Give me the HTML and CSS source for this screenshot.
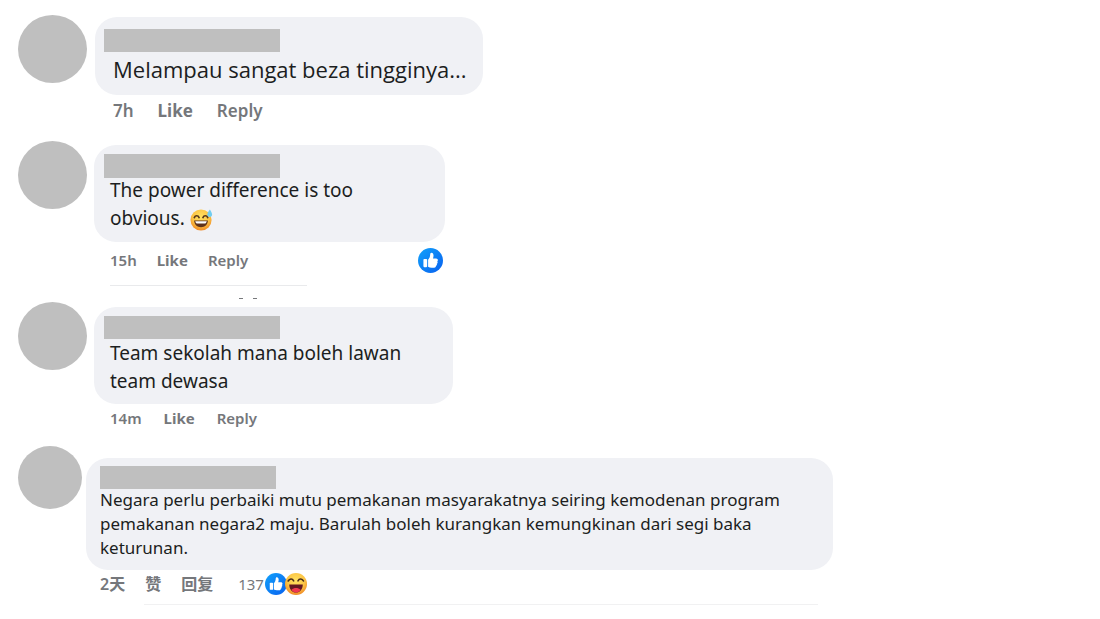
FILE: index.html
```html
<!DOCTYPE html>
<html lang="ms">
<head>
<meta charset="utf-8">
<meta name="viewport" content="width=device-width, initial-scale=1">
<title>Comments</title>
<link rel="stylesheet" href="styles.css">
</head>
<body>
<svg class="defs" width="0" height="0" aria-hidden="true">
  <defs>
    <linearGradient id="blue" x1="0" y1="0" x2="1" y2="1"><stop offset="0" stop-color="#12a2fb"/><stop offset="1" stop-color="#0860ef"/></linearGradient>
    <radialGradient id="face" cx=".5" cy=".35" r=".65"><stop offset="0" stop-color="#ffe261"/><stop offset=".6" stop-color="#fcc545"/><stop offset="1" stop-color="#f08a26"/></radialGradient>
    <symbol id="thumb" viewBox="0 0 24 24">
      <circle cx="12" cy="12" r="12" fill="url(#blue)"/>
      <rect x="5.2" y="10.6" width="3.600" height="7.800" rx=".8" fill="#fff"/>
      <path fill="#fff" d="M9.700 11.200c1.300-1.200 1.900-2.800 2-4.900 0-1 .4-1.700 1.200-1.700 1.300 0 2 1.200 2 2.700 0 1-.2 1.900-.5 2.700h3c1 0 1.700.7 1.700 1.600 0 .6-.2 1-.6 1.300.3.3.4.7.3 1.200-.1.500-.4.900-.8 1.100.2.4.2.8.1 1.200-.2.400-.5.700-.9.800.1 1-.6 1.700-1.700 1.700h-2.500c-1.300 0-2.300-.3-3.300-.9z"/>
    </symbol>
    <symbol id="laugh" viewBox="0 0 24 24">
      <circle cx="12" cy="12" r="12" fill="url(#face)"/>
      <path d="M3.500 8.700c1.500-2.700 4.500-3 5.900-.2M14.200 8.500c1.500-2.800 4.500-2.500 5.900.2" fill="none" stroke="#4a2d1b" stroke-width="1.800" stroke-linecap="round"/>
      <path d="M4.600 12.500h14.800c0 5-3 8.800-7.400 8.800s-7.400-3.800-7.400-8.800z" fill="#641722"/>
      <path d="M7 18.300c2.700-2.600 7.300-2.600 10 0-1.200 1.900-2.900 3-5 3s-3.800-1.100-5-3z" fill="#f0384f"/>
    </symbol>
    <symbol id="sweat" viewBox="0 0 24 24">
      <circle cx="11.500" cy="12.500" r="11" fill="url(#face)"/>
      <path d="M4.500 10c1-2.500 4-2.500 5 0M13.500 10c1-2.500 4-2.500 5 0" fill="none" stroke="#55361b" stroke-width="1.700" stroke-linecap="round"/>
      <path d="M4.300 13h14.400c-.2 4.300-3.300 7-7.200 7s-7-2.700-7.200-7z" fill="#60321c"/>
      <path d="M5.500 13.800h12c-.4 1.700-1.300 2.400-2.200 2.400H7.700c-1 0-1.900-.8-2.200-2.400z" fill="#fff"/>
      <path d="M20.800 1.500c-1.700 2.100-3 4-2.700 5.800.3 1.500 1.500 2.200 2.900 2 1.500-.3 2.300-1.600 2-3.100-.3-1.600-1.200-3-2.200-4.700z" fill="#71cdf0"/>
    </symbol>
  </defs>
</svg>
<main class="thread">
  <article class="comment first">
    <div class="avatar"></div>
    <div class="body">
      <div class="bubble"><div class="name"></div><p class="text">Melampau sangat beza tingginya...</p></div>
      <div class="actions"><span>7h</span><button type="button" class="like">Like</button><button type="button">Reply</button></div>
    </div>
  </article>
  <article class="comment second">
    <div class="avatar"></div>
    <div class="body">
      <div class="bubble"><div class="name"></div><p class="text">The power difference is too obvious. <svg class="emoji" role="img" aria-label="Grinning face with sweat"><use href="#sweat"/></svg></p></div>
      <div class="actions"><span>15h</span><button type="button" class="like">Like</button><button type="button">Reply</button><svg class="badge" role="img" aria-label="Like reaction"><use href="#thumb"/></svg></div>
      <hr class="rule">
      <div class="marks"><i></i><i></i></div>
    </div>
  </article>
  <article class="comment third">
    <div class="avatar"></div>
    <div class="body">
      <div class="bubble"><div class="name"></div><p class="text">Team sekolah mana boleh lawan team dewasa</p></div>
      <div class="actions"><span>14m</span><button type="button" class="like">Like</button><button type="button">Reply</button></div>
    </div>
  </article>
  <article class="comment fourth">
    <div class="avatar"></div>
    <div class="body">
      <div class="bubble"><div class="name"></div><p class="text">Negara perlu perbaiki mutu pemakanan masyarakatnya seiring kemodenan program pemakanan negara2 maju. Barulah boleh kurangkan kemungkinan dari segi baka keturunan.</p></div>
      <div class="actions" lang="zh-CN"><span>2天</span><button type="button">赞</button><button type="button">回复</button><span class="reactions"><span>137</span><svg role="img" aria-label="Like"><use href="#thumb"/></svg><svg role="img" aria-label="Haha"><use href="#laugh"/></svg></span></div>
      <hr class="rule">
    </div>
  </article>
</main>
</body>
</html>
```

FILE: styles.css
```css
* { box-sizing: border-box; }
body {
  margin: 0;
  background: #fff;
  color: #1c1e21;
  font-family: "Noto Sans", "Open Sans", "Noto Sans CJK SC", sans-serif;
}
.defs { position: absolute; }
.thread { padding: 15px 18px; }
.comment { display: flex; align-items: flex-start; gap: 7px; }
.avatar { flex: none; width: 69px; height: 68px; border-radius: 50%; background: #bfbfbf; }
.body { flex: 1; min-width: 0; }
.bubble { padding: 9px 16px; border-radius: 22px; background: #f0f1f5; }
.name { width: 176px; max-width: 100%; height: 23px; margin-left: -6px; background: #bfbfbf; }
.text { margin: 0; font-size: 19px; line-height: 28px; }
.actions {
  display: flex;
  align-items: center;
  gap: 22px;
  padding-left: 16px;
  color: #75777b;
  font-size: 15px;
  font-weight: 600;
  line-height: 20px;
}
.actions button { padding: 0; border: 0; background: none; color: inherit; font: inherit; cursor: pointer; }
.actions .like { font-weight: 700; }
.rule { height: 1px; margin: 0; border: 0; background: #e9eaec; }

.first { gap: 8px; }
.first .bubble { max-width: 388px; margin-top: 2px; padding: 12px 16px 12px 18px; }
.first .name { margin-left: -9px; }
.first .text { margin-top: 3px; font-family: "Open Sans", "Noto Sans", sans-serif; font-size: 22px; }
.first .actions { margin-top: 6px; padding-left: 18px; gap: 24px; font-size: 17px; }

.second { margin-top: 20px; }
.second .bubble { max-width: 351px; margin-top: 4px; padding: 9px 40px 10px 16px; }
.second .name { height: 24px; }
.second .text { margin-top: -2px; }
.second .actions { max-width: 349px; height: 26px; margin-top: 5px; gap: 20px; }
.emoji { width: 23px; height: 23px; vertical-align: -6px; }
.badge { width: 25px; height: 25px; margin-left: auto; }
.second .rule { max-width: 197px; margin: 12px 0 0 16px; }
.marks { display: flex; gap: 10px; margin: 12px 0 0 145px; }
.marks i { width: 4px; height: 1px; background: #77797c; }

.third { margin-top: 3px; }
.third .bubble { max-width: 359px; margin-top: 5px; padding-right: 40px; }
.third .actions { margin-top: 4px; }

.fourth { margin-top: 18px; gap: 4px; }
.fourth .avatar { width: 64px; height: 63px; }
.fourth .bubble { max-width: 747px; margin-top: 12px; padding: 8px 40px 10px 14px; }
.fourth .name { margin-left: 0; }
.fourth .text { margin-top: -1px; font-size: 17px; line-height: 24px; }
.fourth .actions { height: 26px; margin-top: 1px; padding-left: 14px; gap: 20px; font-size: 16px; }
.reactions { display: flex; align-items: center; margin-left: 5px; font-size: 15px; font-weight: 400; }
.reactions svg { width: 22px; height: 22px; margin-left: 1px; }
.reactions svg + svg { margin-left: -2px; }
.fourth .rule { max-width: 674px; margin: 7px 0 0 58px; background: #f1f1f2; }
```
